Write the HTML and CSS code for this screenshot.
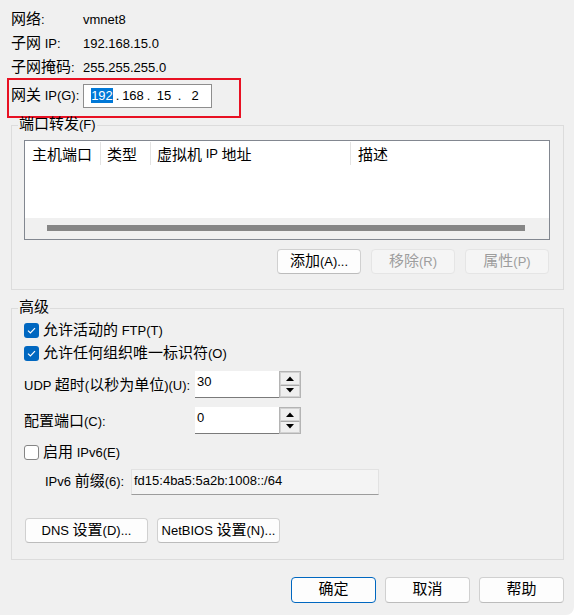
FILE: index.html
```html
<!DOCTYPE html>
<html lang="zh-CN">
<head>
<meta charset="utf-8">
<title>NAT 设置</title>
<link rel="stylesheet" href="styles.css">
</head>
<body>
<div class="window">
  <div class="info">
    <div class="row"><span class="lbl"><span class="zh">网络</span>:</span><span>vmnet8</span></div>
    <div class="row"><span class="lbl"><span class="zh">子网</span> IP:</span><span>192.168.15.0</span></div>
    <div class="row"><span class="lbl"><span class="zh">子网掩码</span>:</span><span>255.255.255.0</span></div>
  </div>

  <div class="gw">
    <span class="lbl"><span class="zh">网关</span> IP(G):</span>
    <div class="ipbox">
      <span class="oct"><span class="sel">192</span></span><span class="dot">.</span>
      <span class="oct">168</span><span class="dot">.</span>
      <span class="oct">15</span><span class="dot">.</span>
      <span class="oct">2</span>
    </div>
  </div>

  <fieldset class="group port">
    <legend><span class="zh">端口转发</span>(F)</legend>
    <div class="listview">
      <div class="lv-head">
        <div class="col c1"><span class="zh">主机端口</span></div>
        <div class="col c2"><span class="zh">类型</span></div>
        <div class="col c3"><span class="zh">虚拟机</span>&nbsp;IP&nbsp;<span class="zh">地址</span></div>
        <div class="col c4"><span class="zh">描述</span></div>
      </div>
      <div class="lv-body"></div>
      <div class="hscroll"><div class="thumb"></div></div>
    </div>
    <div class="btn-row">
      <button class="btn" type="button"><span class="zh">添加</span>(A)...</button>
      <button class="btn" type="button" disabled><span class="zh">移除</span>(R)</button>
      <button class="btn" type="button" disabled><span class="zh">属性</span>(P)</button>
    </div>
  </fieldset>

  <fieldset class="group adv">
    <legend><span class="zh">高级</span></legend>
    <div class="check">
      <span class="box on"><svg width="15" height="15" viewBox="0 0 15 15"><polyline points="4,7.6 6.4,10 11,5.2" fill="none" stroke="#fff" stroke-width="1.2"/></svg></span>
      <span><span class="zh">允许活动的</span> FTP(T)</span>
    </div>
    <div class="check">
      <span class="box on"><svg width="15" height="15" viewBox="0 0 15 15"><polyline points="4,7.6 6.4,10 11,5.2" fill="none" stroke="#fff" stroke-width="1.2"/></svg></span>
      <span><span class="zh">允许任何组织唯一标识符</span>(O)</span>
    </div>

    <div class="spin-row first">
      <span class="slbl">UDP <span class="zh">超时</span>(<span class="zh">以秒为单位</span>)(U):</span>
      <div class="spin-input">30</div>
      <div class="spinner">
        <span class="sb"><svg width="8" height="5" viewBox="0 0 8 5"><polygon points="0,5 4,0.5 8,5" fill="#000"/></svg></span>
        <span class="sb"><svg width="8" height="5" viewBox="0 0 8 5"><polygon points="0,0 8,0 4,4.5" fill="#000"/></svg></span>
      </div>
    </div>
    <div class="spin-row">
      <span class="slbl"><span class="zh">配置端口</span>(C):</span>
      <div class="spin-input">0</div>
      <div class="spinner">
        <span class="sb"><svg width="8" height="5" viewBox="0 0 8 5"><polygon points="0,5 4,0.5 8,5" fill="#000"/></svg></span>
        <span class="sb"><svg width="8" height="5" viewBox="0 0 8 5"><polygon points="0,0 8,0 4,4.5" fill="#000"/></svg></span>
      </div>
    </div>

    <div class="check v6">
      <span class="box off"></span>
      <span><span class="zh">启用</span> IPv6(E)</span>
    </div>
    <div class="prefix-row">
      <span class="plbl">IPv6 <span class="zh">前缀</span>(6):</span>
      <div class="ro-field">fd15:4ba5:5a2b:1008::/64</div>
    </div>

    <div class="btn-row2">
      <button class="btn wide" type="button">DNS <span class="zh">设置</span>(D)...</button>
      <button class="btn wide" type="button">NetBIOS <span class="zh">设置</span>(N)...</button>
    </div>
  </fieldset>

  <div class="footer">
    <button class="btn main default" type="button"><span class="zh">确定</span></button>
    <button class="btn main" type="button"><span class="zh">取消</span></button>
    <button class="btn main" type="button"><span class="zh">帮助</span></button>
  </div>
</div>
</body>
</html>
```

FILE: styles.css
```css
html {
  background: #ffffff;
}

body {
  margin: 0;
  font-family: "Liberation Sans", "Noto Sans CJK SC", sans-serif;
  font-size: 13px;
  line-height: 16px;
  color: #000;
}

.zh {
  font-family: "Noto Sans CJK SC", sans-serif;
  font-size: 15px;
  line-height: 12px;
}

.window {
  background: #f0f0f0;
  height: 615px;
  box-sizing: border-box;
  padding-top: 8px;
  border-bottom-right-radius: 8px;
  overflow: hidden;
}

/* top info */
.info {
  padding-left: 11px;
}

.row {
  display: flex;
  align-items: center;
  height: 24px;
}

.lbl {
  width: 72px;
  flex: none;
}

/* gateway row with red highlight */
.gw {
  margin: -2px 0 0 7px;
  width: 234px;
  height: 40px;
  box-sizing: border-box;
  border: 2px solid #e81123;
  display: flex;
  align-items: center;
  padding: 0 0 4px 2px;
}

.ipbox {
  width: 129px;
  height: 24px;
  box-sizing: border-box;
  border: 1px solid #8e8e8e;
  background: #fff;
  display: flex;
  align-items: center;
  padding-left: 5px;
}

.oct {
  width: 26px;
  text-align: center;
}

.dot {
  width: 5px;
  text-align: center;
}

.sel {
  background: #0078d7;
  color: #fff;
}

/* group boxes */
.group {
  margin: 0 10px 0 11px;
  border: 1px solid #dcdcdc;
  min-width: 0;
}

.group legend {
  padding: 0 1px;
  margin-left: -6px;
  line-height: 16px;
}

.port {
  margin-top: -1px;
  padding: 7px 13px 15px 12px;
}

.adv {
  margin-top: 10px;
  padding: 3px 13px 16px 12px;
}

/* list view */
.listview {
  height: 100px;
  box-sizing: border-box;
  border: 1px solid #828790;
  background: #fff;
  display: flex;
  flex-direction: column;
}

.lv-head {
  display: flex;
  height: 25px;
  flex: none;
}

.col {
  height: 23px;
  margin-top: 1px;
  box-sizing: border-box;
  border-right: 1px solid #e3e3e3;
  padding-left: 6px;
  display: flex;
  align-items: center;
  white-space: nowrap;
}

.c1 { width: 76px; padding-left: 7px; }
.c2 { width: 50px; }
.c3 { width: 200px; }
.c4 { flex: 1; border-right: none; padding-left: 7px; }

.lv-body {
  flex: 1;
}

.hscroll {
  height: 21px;
  flex: none;
  box-sizing: border-box;
  background: #f0f0f0;
  padding: 7px 24px 0 22px;
}

.thumb {
  height: 6px;
  background: #868686;
}

/* buttons */
.btn {
  font: inherit;
  color: #000;
  padding: 0;
  width: 84px;
  height: 25px;
  box-sizing: border-box;
  background: #fdfdfd;
  border: 1px solid #d0d0d0;
  border-bottom-color: #bcbcbc;
  border-radius: 4px;
  white-space: nowrap;
}

.btn[disabled] {
  background: #f5f5f5;
  border-color: #e5e5e5;
  color: #9d9d9d;
}

.btn-row {
  display: flex;
  justify-content: flex-end;
  gap: 10px;
  margin-top: 9px;
  padding-right: 1px;
}

/* checkboxes */
.check {
  display: flex;
  align-items: center;
  height: 23px;
}

.box {
  width: 15px;
  height: 15px;
  box-sizing: border-box;
  border-radius: 3px;
  margin-right: 4px;
  flex: none;
  display: flex;
}

.box.on {
  background: #0067c0;
}

.box.off {
  background: #fff;
  border: 1px solid #858585;
}

.check.v6 {
  margin-top: 7px;
}

/* spin rows */
.spin-row {
  display: flex;
  align-items: center;
  height: 27px;
  margin-top: 9px;
}

.spin-row.first {
  margin-top: 6px;
}

.slbl {
  width: 171px;
  flex: none;
  padding-top: 2px;
}

.spin-row .slbl {
  white-space: nowrap;
}

.spin-input {
  width: 84px;
  height: 27px;
  box-sizing: border-box;
  background: #fff;
  border-bottom: 1px solid #7a7a7a;
  padding: 3px 0 0 2px;
}

.spinner {
  width: 22px;
  height: 27px;
  box-sizing: border-box;
  border: 1px solid #b4b4b4;
  display: flex;
  flex-direction: column;
}

.sb {
  flex: 1;
  background: #efefef;
  border: 1px solid #d2d2d2;
  display: flex;
  align-items: center;
  justify-content: center;
}

.sb + .sb {
  border-top-color: #a8a8a8;
}

/* ipv6 prefix */
.prefix-row {
  display: flex;
  align-items: center;
  height: 26px;
  margin-top: 5px;
}

.plbl {
  width: 107px;
  flex: none;
  box-sizing: border-box;
  padding-left: 21px;
}

.ro-field {
  width: 248px;
  height: 26px;
  box-sizing: border-box;
  background: #f4f4f4;
  border: 1px solid #e2e2e2;
  border-bottom-color: #9c9c9c;
  padding: 3px 0 0 2px;
}

.btn-row2 {
  display: flex;
  gap: 9px;
  margin-top: 23px;
  padding-left: 1px;
}

.btn.wide {
  width: 123px;
}

/* footer */
.footer {
  display: flex;
  justify-content: flex-end;
  gap: 9px;
  margin-top: 17px;
  padding-right: 10px;
}

.btn.main {
  width: 85px;
  height: 26px;
}

.btn.default {
  border-color: #0067c0;
}
```
